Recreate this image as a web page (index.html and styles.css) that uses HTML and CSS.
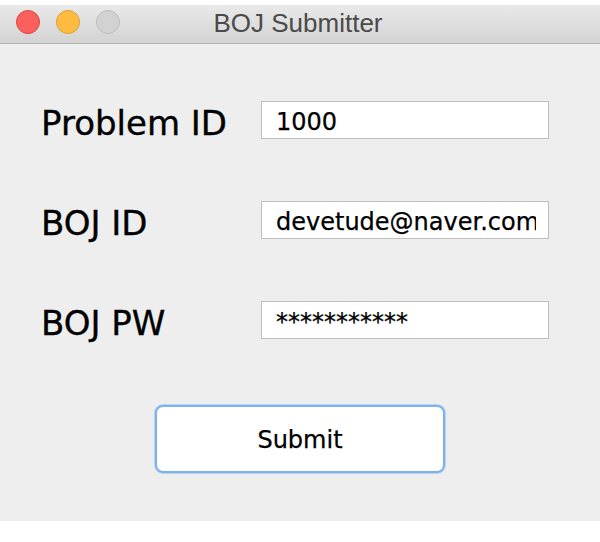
FILE: index.html
```html
<!DOCTYPE html>
<html>
<head>
<meta charset="utf-8">
<link rel="stylesheet" href="styles.css">
</head>
<body>
<div class="window">
  <div class="titlebar">
    <div class="lights">
      <span class="light red"></span>
      <span class="light yellow"></span>
      <span class="light gray"></span>
    </div>
    <div class="title">BOJ Submitter</div>
  </div>
  <div class="content">
    <div class="row">
      <label class="label">Problem ID</label>
      <input class="field" type="text" value="1000">
    </div>
    <div class="row">
      <label class="label">BOJ ID</label>
      <input class="field" type="text" value="devetude@naver.com">
    </div>
    <div class="row">
      <label class="label">BOJ PW</label>
      <input class="field pw" type="text" value="***********">
    </div>
    <div class="actions">
      <button class="submit">Submit</button>
    </div>
  </div>
</div>
</body>
</html>
```

FILE: styles.css
```css
html, body {
  margin: 0;
  padding: 0;
  background: #ffffff;
}

.window {
  padding-top: 5px;
  width: 600px;
}

.titlebar {
  position: relative;
  height: 38px;
  background: linear-gradient(to bottom, #e9e9e9, #d3d3d3);
  border-bottom: 1px solid #b4b4b4;
  display: flex;
  align-items: center;
}

.lights {
  display: flex;
  gap: 16px;
  padding-left: 16px;
  margin-top: -5px;
}

.light {
  display: block;
  width: 22px;
  height: 22px;
  border-radius: 50%;
  border: 1px solid transparent;
}

.light.red {
  background: #fc605c;
  border-color: #e0443f;
}

.light.yellow {
  background: #fdbc40;
  border-color: #dea034;
}

.light.gray {
  background: #d2d2d2;
  border-color: #bdbdbd;
}

.title {
  position: absolute;
  left: 0;
  right: 0;
  top: 3px;
  text-align: center;
  font-family: "Liberation Sans", Arial, sans-serif;
  font-size: 26px;
  line-height: 30px;
  color: #4a4a4a;
  padding-right: 4px;
}

.content {
  height: 477px;
  background: #eeeeee;
  padding-top: 57px;
  box-sizing: border-box;
  display: flex;
  flex-direction: column;
  gap: 62px;
}

.row {
  display: flex;
  align-items: center;
  height: 38px;
  padding-left: 41px;
}

.label {
  width: 220px;
  font-family: "DejaVu Sans", sans-serif;
  font-size: 34px;
  color: #000000;
  line-height: 38px;
  padding-top: 5px;
  -webkit-text-stroke: 0.35px #000000;
}

.field {
  width: 288px;
  height: 38px;
  box-sizing: border-box;
  border: 1px solid #bfbfbf;
  background: #ffffff;
  padding: 4px 12px 0 14px;
  margin: 0;
  font-family: "DejaVu Sans", sans-serif;
  font-size: 24px;
  color: #000000;
  outline: none;
  -webkit-text-stroke: 0.25px #000000;
}

.actions {
  display: flex;
  justify-content: center;
  margin-top: 4px;
}

.submit {
  width: 290px;
  height: 68px;
  box-sizing: border-box;
  background: #ffffff;
  border: 2px solid #80b2ea;
  border-radius: 8px;
  box-shadow: 0 0 0 1px #b9d4f3;
  font-family: "DejaVu Sans", sans-serif;
  font-size: 24px;
  color: #000000;
  padding: 2px 0 0 0;
  -webkit-text-stroke: 0.25px #000000;
}
```
